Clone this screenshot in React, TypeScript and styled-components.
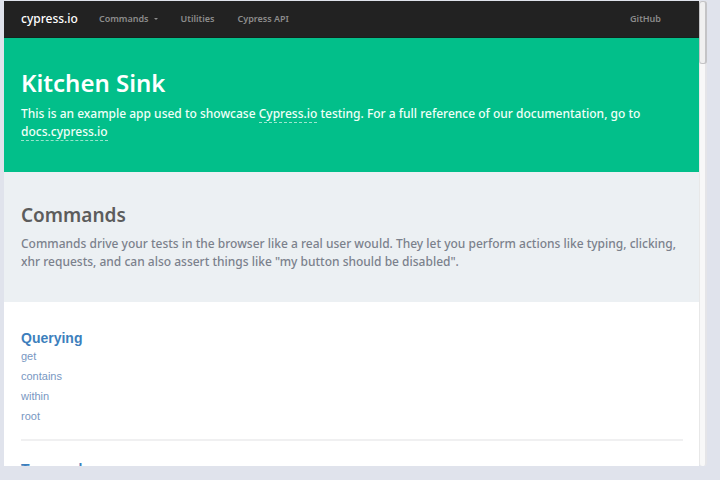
import React from "react";
import styled, { createGlobalStyle } from "styled-components";

const humanist = '"Noto Sans", "Open Sans", sans-serif';
const grotesque = '"Liberation Sans", Arial, sans-serif';

const GlobalStyle = createGlobalStyle`
  * { box-sizing: border-box; }
  body { margin: 0; background: #e0e3ec; font-family: ${humanist}; }
  h1, h2, h3, p, ul { margin: 0; padding: 0; }
  ul { list-style: none; }
  a { text-decoration: none; }
`;

const Frame = styled.div`
  display: flex;
  height: 100vh;
  padding: 1px 13px 14px 4px;
`;

const Page = styled.div`
  flex: 1;
  min-width: 0;
  overflow: hidden;
  background: #fff;
`;

const ScrollTrack = styled.div`
  width: 8px;
  background: #f8f8f8;
  border-left: 1px solid #e8e8e8;
  border-right: 2px solid #e5e5e8;
  border-radius: 0 0 3px 3px;
`;

const ScrollThumb = styled.div`
  height: 63px;
  margin: 0 -2px 0 -1px;
  background: #f0f0f0;
  border: 1px solid #c4c4c6;
  border-right-width: 2px;
  border-radius: 3px;
`;

const Navbar = styled.nav`
  display: flex;
  align-items: center;
  height: 37px;
  padding: 0 38px 0 17px;
  background: #222;
  border-bottom: 1px solid #14231d;
`;

const Brand = styled.a`
  margin-right: 21px;
  color: #fff;
  font-size: 12px;
  font-weight: 500;
  line-height: 20px;
`;

const NavList = styled.ul`
  display: flex;
  flex: 1;
  gap: 23px;
`;

const NavItem = styled.li<{ $end?: boolean }>`
  display: flex;
  margin-left: ${({ $end }) => ($end ? "auto" : "0")};
`;

const NavLink = styled.a`
  color: #8c8c8c;
  font-size: 9px;
  font-weight: 600;
  line-height: 20px;
`;

const MenuButton = styled.button`
  display: flex;
  align-items: center;
  gap: 5px;
  padding: 0;
  border: 0;
  background: none;
  color: #8c8c8c;
  font: 600 9px/20px ${humanist};
`;

const Caret = styled.span`
  border: 2px solid transparent;
  border-top-color: currentColor;
  border-bottom: 0;
`;

const Banner = styled.header<{ $muted?: boolean }>`
  padding: 28px 17px 31px;
  background: ${({ $muted }) => ($muted ? "#ecf0f3" : "#02bf8a")};
  color: ${({ $muted }) => ($muted ? "#7b818c" : "#f0fff8")};
`;

const Title = styled.h1`
  margin-bottom: 5px;
  color: #fff;
  font-size: 24px;
  font-weight: 600;
  line-height: 34px;
`;

const SectionTitle = styled.h2`
  margin-bottom: 5px;
  color: #5c5c5c;
  font-size: 19px;
  font-weight: 600;
  line-height: 30px;
`;

const Lead = styled.p`
  font-size: 12px;
  font-weight: 500;
  line-height: 18px;
`;

const DocLink = styled.a`
  color: inherit;
  border-bottom: 1px dashed #9be6cf;
`;

const Content = styled.main`
  padding: 28px 16px 0 17px;
`;

const Group = styled.section`
  & + & {
    margin-top: 13px;
    padding-top: 20px;
    border-top: 2px solid #f0f0f1;
  }
`;

const GroupTitle = styled.h3`
  font: 700 14px/16px ${grotesque};
  a { color: #3d7fbd; }
`;

const GroupLink = styled.a`
  display: block;
  color: #7897c2;
  font: 400 11px/20px ${grotesque};
`;

const groups = [
  { title: "Querying", items: ["get", "contains", "within", "root"] },
  { title: "Traversal", items: [] },
];

export default function App() {
  return (
    <>
      <GlobalStyle />
      <Frame>
        <Page>
          <Navbar>
            <Brand href="#">cypress.io</Brand>
            <NavList>
              <NavItem>
                <MenuButton type="button">
                  Commands <Caret />
                </MenuButton>
              </NavItem>
              <NavItem><NavLink href="#utilities">Utilities</NavLink></NavItem>
              <NavItem><NavLink href="#api">Cypress API</NavLink></NavItem>
              <NavItem $end><NavLink href="#github">GitHub</NavLink></NavItem>
            </NavList>
          </Navbar>
          <Banner>
            <Title>Kitchen Sink</Title>
            <Lead>
              This is an example app used to showcase <DocLink href="#cypress">Cypress.io</DocLink> testing.
              For a full reference of our documentation, go to <DocLink href="#docs">docs.cypress.io</DocLink>
            </Lead>
          </Banner>
          <Banner as="section" $muted>
            <SectionTitle>Commands</SectionTitle>
            <Lead>
              Commands drive your tests in the browser like a real user would. They let you perform
              actions like typing, clicking, xhr requests, and can also assert things like "my button
              should be disabled".
            </Lead>
          </Banner>
          <Content>
            {groups.map(({ title, items }) => (
              <Group key={title}>
                <GroupTitle><a href={`#${title}`}>{title}</a></GroupTitle>
                <ul>
                  {items.map((item) => (
                    <li key={item}><GroupLink href={`#${item}`}>{item}</GroupLink></li>
                  ))}
                </ul>
              </Group>
            ))}
          </Content>
        </Page>
        <ScrollTrack><ScrollThumb /></ScrollTrack>
      </Frame>
    </>
  );
}
